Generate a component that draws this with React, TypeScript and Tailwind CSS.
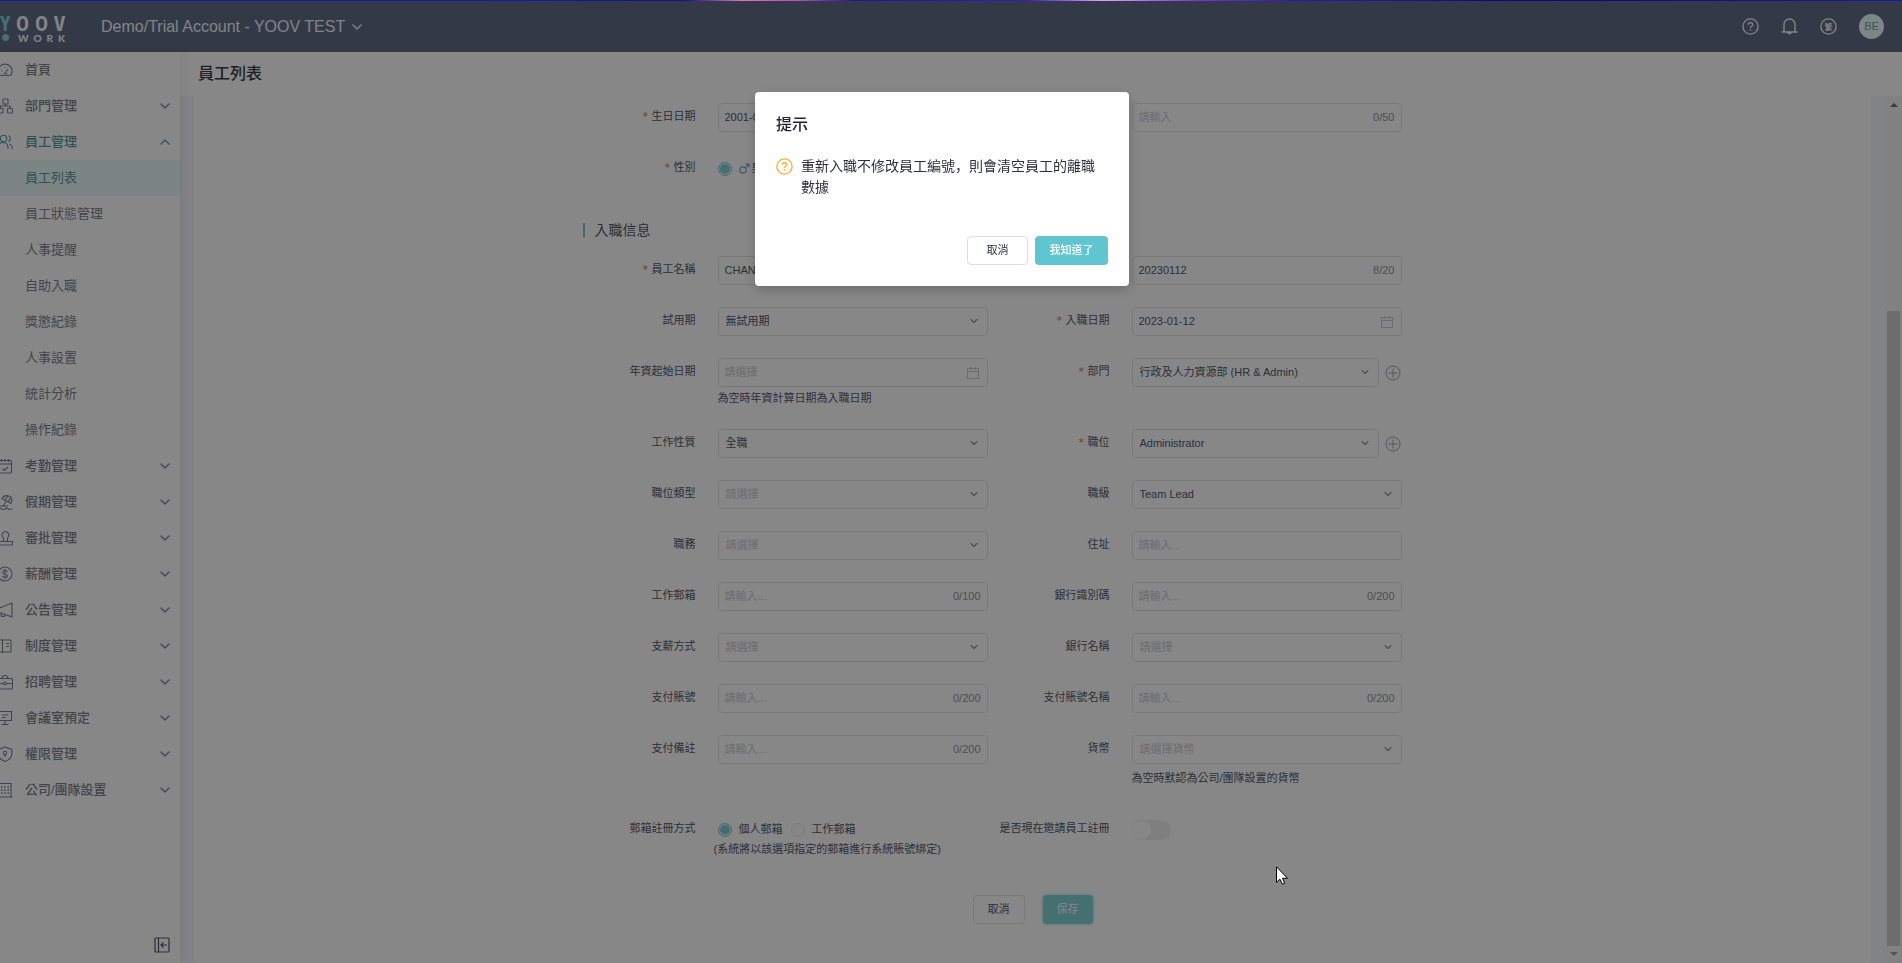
import { useId, type ReactNode } from "react";
import { ChevronDown, ChevronUp } from "lucide-react";

type MenuItem = {
  label: string;
  icon: ReactNode;
  leaf?: boolean;
  children?: string[];
};

const MENU: MenuItem[] = [
  {
    label: "首頁",
    leaf: true,
    icon: (
      <>
        <path d="M2.5 13.5a7 7 0 1 1 11 0z" />
        <path d="M8.5 10.5 11 7M7 12.5a1.5 1.5 0 0 1 3 0M4 9h1M8 5v1" />
      </>
    ),
  },
  {
    label: "部門管理",
    icon: (
      <>
        <rect x="6" y="1" width="5" height="5" rx="0.5" />
        <rect x="1" y="10.5" width="5" height="4.5" rx="0.5" />
        <rect x="10.5" y="10.5" width="5" height="4.5" rx="0.5" />
        <path d="M8.5 6v2M3.5 10.5V8H13v2.5" />
      </>
    ),
  },
  {
    label: "員工管理",
    icon: (
      <>
        <circle cx="6.5" cy="4.5" r="3.2" />
        <path d="M1 15v-1.5a5 5 0 0 1 10 0V15M11.5 1.5a3.3 3.3 0 0 1 0 6M12.5 10c1.8.6 2.8 2.3 2.8 5" />
      </>
    ),
    children: [
      "員工列表",
      "員工狀態管理",
      "人事提醒",
      "自助入職",
      "獎懲紀錄",
      "人事設置",
      "統計分析",
      "操作紀錄",
    ],
  },
  {
    label: "考勤管理",
    icon: (
      <>
        <rect x="1" y="2.5" width="13.5" height="12.5" rx="1" />
        <path d="M1 6h13.5M4.5 1v3M8 1v3M11.5 1v3M5.5 10.5l2 2L11 9" />
      </>
    ),
  },
  {
    label: "假期管理",
    icon: (
      <>
        <path d="M5 4.5C7.5 0 14.500 1 15 6l-1 3.500zM8.500 5.800 11 1.500M11.500 7.500l2.500-5M9.500 7 6 12.500" />
        <path d="M1 15c1-1 2.500-1 3.500 0s2.500 1 3.500 0 2.500-1 3.500 0 2 1 3.500 0M2 12h9" />
      </>
    ),
  },
  {
    label: "審批管理",
    icon: (
      <>
        <path d="M6.500 11.500c0-2 .3-3-.6-4.500a3.300 3.300 0 1 1 5.200 0c-.9 1.500-.6 2.500-.6 4.500" />
        <path d="M1.500 11.500h14V15h-14z" />
      </>
    ),
  },
  {
    label: "薪酬管理",
    icon: (
      <>
        <circle cx="8" cy="8" r="7" />
        <path d="M10.500 6c-.3-1-1.200-1.500-2.500-1.500S5.700 5.200 5.700 6.200c0 2.300 4.800 1.200 4.800 3.600 0 1-1 1.700-2.500 1.700s-2.400-.6-2.700-1.600M8 3v10" />
      </>
    ),
  },
  {
    label: "公告管理",
    icon: (
      <>
        <path d="M1 5.500h3L15 1v14L4 11H1z" />
        <path d="M4 11v1.500a2 2 0 0 0 4 0" />
      </>
    ),
  },
  {
    label: "制度管理",
    icon: (
      <>
        <rect x="1" y="2" width="13" height="12" rx="1" />
        <path d="M5.500 1v14M9 5.500h3M9 8.500h3" />
      </>
    ),
  },
  {
    label: "招聘管理",
    icon: (
      <>
        <rect x="1" y="4.500" width="14.500" height="10.500" rx="1" />
        <path d="M5 4.500c0-2 1-3 3-3s3 1 3 3M1 9.500h5.500M9.500 9.500h6" />
        <circle cx="8" cy="9.500" r="1.500" />
      </>
    ),
  },
  {
    label: "會議室預定",
    icon: (
      <path d="M.5 1.500h15M1.500 1.500v9h13v-9M8 10.500V14M4.500 14.500h7M5 5h6.500M5 7.500h4" />
    ),
  },
  {
    label: "權限管理",
    icon: (
      <>
        <path d="M8 1l6.800 2.500V8c0 3.500-2.800 6-6.800 7.500C4 14 1.200 11.500 1.200 8V3.500z" />
        <circle cx="8" cy="7" r="1.700" />
        <path d="M8 8.500V11" />
      </>
    ),
  },
  {
    label: "公司/團隊設置",
    icon: (
      <>
        <path d="M1.500 15V1.500H14V15M.5 15h15" />
        <path
          strokeWidth="1.6"
          d="M4 5h1.500M7.200 5h1.500M10.500 5H12M4 8h1.500M7.200 8h1.500M10.500 8H12M4 11h1.500M7.200 11h1.500M10.500 11H12"
        />
      </>
    ),
  },
];

function LineIcon({ children }: { children: ReactNode }) {
  return (
    <svg
      viewBox="0 0 16 16"
      className="-ml-[3px] size-4 shrink-0"
      fill="none"
      stroke="currentColor"
      strokeWidth="1.1"
      aria-hidden="true"
    >
      {children}
    </svg>
  );
}

function CalendarIcon() {
  return (
    <svg
      viewBox="0 0 12 12"
      className="mr-0.5 size-3 shrink-0 text-[#c9ccd2]"
      fill="none"
      stroke="currentColor"
      aria-hidden="true"
    >
      <path d="M.5 1.500h11v10H.5zM.5 4.500h11M3.500 0v3M8.500 0v3" />
    </svg>
  );
}

function QuestionIcon({ className }: { className: string }) {
  return (
    <svg
      viewBox="0 0 17 17"
      className={className}
      fill="none"
      stroke="currentColor"
      strokeWidth="1.4"
      aria-hidden="true"
    >
      <circle cx="8.500" cy="8.500" r="7.600" />
      <path d="M6.300 6.800c0-1.300 1-2.100 2.200-2.100s2.200.8 2.200 2c0 1.500-2.200 1.600-2.200 3.300M8.500 11v1.500" />
    </svg>
  );
}

function PlusButton({ label }: { label: string }) {
  return (
    <button type="button" aria-label={label} className="cursor-pointer pr-px">
      <svg
        viewBox="0 0 16 16"
        className="size-4 text-[#a0a4ad]"
        fill="none"
        stroke="currentColor"
        aria-hidden="true"
      >
        <circle cx="8" cy="8" r="7" />
        <path d="M8 3.500v9M3.500 8h9" />
      </svg>
    </button>
  );
}

function Header() {
  return (
    <header className="flex h-[52px] shrink-0 items-center bg-[#626d88] pt-px pr-[18px] text-[#f5f7fa]">
      <a href="#home" aria-label="YOOV WORK" className="block w-[65px]">
        <div className="flex items-center justify-between font-['Open_Sans_Condensed','Liberation_Sans',sans-serif] text-[22px] leading-[22px] font-bold">
          <span className="text-[#82d3d8]">Y</span>
          <span>O</span>
          <span>O</span>
          <span>V</span>
        </div>
        <div className="flex items-center">
          <span className="ml-[2px] size-[7px] rounded-full bg-[#82d3d8]" />
          <div className="ml-[9px] flex flex-1 justify-between font-[Lato,sans-serif] text-[10px] leading-[10px] font-black">
            <span>W</span>
            <span>O</span>
            <span>R</span>
            <span>K</span>
          </div>
        </div>
      </a>
      <button
        type="button"
        className="ml-9 flex cursor-pointer items-center gap-1 text-[16px]"
      >
        Demo/Trial Account - YOOV TEST
        <ChevronDown size={16} strokeWidth={2} />
      </button>
      <div className="ml-auto flex items-center gap-[22px]">
        <button type="button" aria-label="幫助" className="cursor-pointer">
          <QuestionIcon className="size-[17px]" />
        </button>
        <button type="button" aria-label="通知" className="cursor-pointer">
          <svg
            viewBox="0 0 17 17"
            className="size-[17px]"
            fill="none"
            stroke="currentColor"
            strokeWidth="1.4"
            aria-hidden="true"
          >
            <path d="M.5 14h16M3 14V6.500a5.500 5.500 0 0 1 11 0V14M6.800 14.500a1.800 1.800 0 0 0 3.400 0" />
          </svg>
        </button>
        <button type="button" aria-label="語言" className="cursor-pointer">
          <svg viewBox="0 0 17 17" className="size-[17px]">
            <circle
              cx="8.500"
              cy="8.500"
              r="7.600"
              fill="none"
              stroke="currentColor"
              strokeWidth="1.4"
            />
            <text
              x="8.500"
              y="11.500"
              textAnchor="middle"
              fill="currentColor"
              className="text-[8px] font-bold"
            >
              繁
            </text>
          </svg>
        </button>
        <button
          type="button"
          className="size-[25px] cursor-pointer rounded-full bg-[#f0fbfb] text-[11px] text-[#5fa9b3]"
        >
          BE
        </button>
      </div>
    </header>
  );
}

function Sidebar() {
  return (
    <nav className="z-10 flex w-[180px] shrink-0 flex-col bg-white text-[13px] text-[#7d838e] shadow-[2px_0_8px_rgba(29,35,41,0.08)]">
      <ul>
        {MENU.map((item) => (
          <li key={item.label}>
            <a
              href="#menu"
              className={
                item.children
                  ? "flex h-9 items-center pr-[7px] font-medium text-[#4f9ea5]"
                  : "flex h-9 items-center pr-[7px] font-medium"
              }
            >
              <LineIcon>{item.icon}</LineIcon>
              <span className="ml-3 flex-1">{item.label}</span>
              {item.children && <ChevronUp size={16} strokeWidth={1.8} />}
              {!item.children && !item.leaf && (
                <ChevronDown size={16} strokeWidth={1.8} />
              )}
            </a>
            {item.children && (
              <ul>
                {item.children.map((child, i) => (
                  <li key={child}>
                    <a
                      href="#menu"
                      className={
                        i === 0
                          ? "flex h-9 items-center bg-[#ebfafa] pl-[25px] text-[#4f9ea5]"
                          : "flex h-9 items-center pl-[25px]"
                      }
                    >
                      {child}
                    </a>
                  </li>
                ))}
              </ul>
            )}
          </li>
        ))}
      </ul>
      <button
        type="button"
        aria-label="收起選單"
        className="mt-auto mr-[10px] mb-[10px] cursor-pointer self-end text-[#515a6e]"
      >
        <svg
          viewBox="0 0 16 16"
          className="size-4"
          fill="none"
          stroke="currentColor"
          strokeWidth="1.2"
          aria-hidden="true"
        >
          <rect x="1" y="1" width="14" height="14" rx="1" />
          <path d="M4.500 1v14M13 8H7.500M9.500 5.500 7 8l2.500 2.500" />
        </svg>
      </button>
    </nav>
  );
}

function Field({
  label,
  id,
  required,
  help,
  children,
}: {
  label: string;
  id?: string;
  required?: boolean;
  help?: ReactNode;
  children: ReactNode;
}) {
  return (
    <div className="flex items-start">
      <label
        htmlFor={id}
        className="flex-1 pr-[22px] text-right leading-[27px] whitespace-nowrap"
      >
        {required && (
          <span className="mr-[3px] font-['DejaVu_Sans_Mono',monospace] leading-none text-[#ed4014]/80">
            *
          </span>
        )}
        {label}
      </label>
      <div className="w-[270px]">
        {children}
        {help}
      </div>
    </div>
  );
}

type FieldProps = {
  label: string;
  required?: boolean;
  value?: string;
  placeholder?: string;
  help?: ReactNode;
};

function TextField({
  count,
  calendar,
  ...props
}: FieldProps & { count?: string; calendar?: boolean }) {
  const id = useId();
  return (
    <Field label={props.label} id={id} required={props.required} help={props.help}>
      <div className="flex h-[29px] items-center rounded border border-[#e2e4e8] px-1.5">
        <input
          id={id}
          type="text"
          defaultValue={props.value}
          placeholder={props.placeholder}
          className="min-w-0 flex-1 outline-none placeholder:text-[#cbced5]"
        />
        {count && <span className="text-[#8f949e]">{count}</span>}
        {calendar && <CalendarIcon />}
      </div>
    </Field>
  );
}

function SelectField({ addLabel, ...props }: FieldProps & { addLabel?: string }) {
  const id = useId();
  return (
    <Field label={props.label} id={id} required={props.required} help={props.help}>
      <div className="flex items-center gap-1.5">
        <div className="relative flex-1">
          <select
            id={id}
            className={
              props.value
                ? "block h-[29px] w-full appearance-none rounded border border-[#e2e4e8] px-[7px] outline-none"
                : "block h-[29px] w-full appearance-none rounded border border-[#e2e4e8] px-[7px] text-[#cbced5] outline-none"
            }
          >
            <option>{props.value ?? props.placeholder}</option>
          </select>
          <ChevronDown
            size={12}
            strokeWidth={2.2}
            className="pointer-events-none absolute top-2 right-2 text-[#8f949e]"
          />
        </div>
        {addLabel && <PlusButton label={addLabel} />}
      </div>
    </Field>
  );
}

function Radio({
  name,
  checked,
  children,
}: {
  name: string;
  checked?: boolean;
  children: ReactNode;
}) {
  return (
    <label className="flex items-center gap-[7px]">
      <input
        type="radio"
        name={name}
        defaultChecked={checked}
        className="size-[14px] appearance-none rounded-full border border-[#e2e4e8] checked:border-[#82cfd4] checked:bg-[#82cfd4] checked:shadow-[inset_0_0_0_1px_white]"
      />
      {children}
    </label>
  );
}

function EmployeeForm() {
  const toggleId = useId();
  return (
    <form className="mx-auto w-[900px] pt-[7px] text-[11px] text-[#515a6e]">
      <div className="grid grid-cols-[405px_414px] gap-y-[22px]">
        <TextField label="生日日期" required value="2001-01-01" calendar />
        <TextField label="" placeholder="請輸入" count="0/50" />
        <Field label="性別" required>
          <div className="flex h-[29px] items-center gap-2">
            <Radio name="gender" checked>
              <span className="flex items-center gap-0.5">
                <svg
                  viewBox="0 0 11 11"
                  className="size-[11px] text-[#6fa8dc]"
                  fill="none"
                  stroke="currentColor"
                  strokeWidth="1.2"
                  aria-hidden="true"
                >
                  <circle cx="4" cy="7" r="3.200" />
                  <path d="M6.300 4.700 10 1M6.500 1H10v3.500" />
                </svg>
                男
              </span>
            </Radio>
            <Radio name="gender">女</Radio>
          </div>
        </Field>
      </div>

      <h2 className="mt-[37px] mb-4 flex h-5 items-center gap-[10px] text-[14px]">
        <span className="h-[14px] w-0.5 bg-[#7cc8ce]" />
        入職信息
      </h2>

      <div className="grid grid-cols-[405px_414px] gap-y-[22px]">
        <TextField label="員工名稱" required value="CHAN TAI MAN" />
        <TextField label="員工編號" required value="20230112" count="8/20" />
        <SelectField label="試用期" value="無試用期" />
        <TextField label="入職日期" required value="2023-01-12" calendar />
        <TextField
          label="年資起始日期"
          placeholder="請選擇"
          calendar
          help={
            <p className="pt-0.5 leading-[18px]">為空時年資計算日期為入職日期</p>
          }
        />
        <SelectField
          label="部門"
          required
          value="行政及人力資源部 (HR & Admin)"
          addLabel="新增部門"
        />
        <SelectField label="工作性質" value="全職" />
        <SelectField label="職位" required value="Administrator" addLabel="新增職位" />
        <SelectField label="職位類型" placeholder="請選擇" />
        <SelectField label="職級" value="Team Lead" />
        <SelectField label="職務" placeholder="請選擇" />
        <TextField label="住址" placeholder="請輸入..." />
        <TextField label="工作郵箱" placeholder="請輸入..." count="0/100" />
        <TextField label="銀行識別碼" placeholder="請輸入..." count="0/200" />
        <SelectField label="支薪方式" placeholder="請選擇" />
        <SelectField label="銀行名稱" placeholder="請選擇" />
        <TextField label="支付賬號" placeholder="請輸入..." count="0/200" />
        <TextField label="支付賬號名稱" placeholder="請輸入..." count="0/200" />
        <TextField label="支付備註" placeholder="請輸入..." count="0/200" />
        <SelectField
          label="貨幣"
          placeholder="請選擇貨幣"
          help={
            <p className="pt-[5px] leading-[18px]">
              為空時默認為公司/團隊設置的貨幣
            </p>
          }
        />
      </div>

      <div className="mt-7 grid grid-cols-[405px_414px]">
        <Field label="郵箱註冊方式">
          <div className="flex h-[29px] items-center gap-2">
            <Radio name="register" checked>
              個人郵箱
            </Radio>
            <Radio name="register">工作郵箱</Radio>
          </div>
          <p className="-ml-1 leading-[10px]">(系統將以該選項指定的郵箱進行系統賬號綁定)</p>
        </Field>
        <Field label="是否現在邀請員工註冊" id={toggleId}>
          <div className="flex h-[29px] items-center">
            <input
              id={toggleId}
              type="checkbox"
              role="switch"
              className="h-5 w-[39px] appearance-none rounded-full bg-[#f0f0f1] p-px before:block before:size-[18px] before:rounded-full before:bg-white checked:bg-[#82cfd4] checked:before:ml-auto"
            />
          </div>
        </Field>
      </div>

      <div className="mt-[41px] flex justify-center gap-[18px]">
        <button
          type="button"
          className="h-[29px] cursor-pointer rounded border border-[#e2e4e8] px-[14px]"
        >
          取消
        </button>
        <button
          type="submit"
          className="h-[29px] cursor-pointer rounded bg-[#82d3d8] px-[14px] text-white shadow-[0_0_0_2px_rgba(95,197,208,0.2)]"
        >
          保存
        </button>
      </div>
    </form>
  );
}

function ScrollBar() {
  return (
    <div
      className="flex w-[17px] flex-col items-center bg-[#f5f5f6] py-[7px]"
      aria-hidden="true"
    >
      <span className="size-0 border-x-4 border-b-4 border-x-transparent border-b-[#707070]" />
      <span className="mt-[204px] w-[13px] flex-1 bg-[#cfcfcf]" />
      <span className="mt-1.5 size-0 border-x-4 border-t-4 border-x-transparent border-t-[#a0a0a0]" />
    </div>
  );
}

function ConfirmDialog() {
  return (
    <div className="fixed inset-0 z-20 bg-black/47 pt-[92px] pr-[18px]">
      <div
        role="dialog"
        aria-modal="true"
        aria-labelledby="dialog-title"
        className="mx-auto w-[374px] rounded bg-white p-[21px] shadow-[0_4px_12px_rgba(0,0,0,0.2)]"
      >
        <h2
          id="dialog-title"
          className="text-[16px] leading-6 font-medium text-[#1f2433]"
        >
          提示
        </h2>
        <div className="mt-[19px] flex gap-2">
          <QuestionIcon className="mt-0.5 size-[17px] shrink-0 text-[#ffad33]" />
          <p className="font-['Liberation_Sans','Noto_Sans_CJK_SC',sans-serif] text-[14px] leading-[21px] text-[#2b3040]">
            重新入職不修改員工編號，則會清空員工的離職數據
          </p>
        </div>
        <div className="mt-[38px] flex justify-end gap-[7px] text-[11px]">
          <button
            type="button"
            className="h-[29px] min-w-[61px] cursor-pointer rounded border border-[#dcdee2] text-[#2b3040]"
          >
            取消
          </button>
          <button
            type="button"
            className="h-[29px] min-w-[73px] cursor-pointer rounded bg-[#5fc5d0] font-medium text-white"
          >
            我知道了
          </button>
        </div>
      </div>
    </div>
  );
}

function Pointer() {
  return (
    <svg
      viewBox="0 0 12 19"
      className="pointer-events-none fixed top-[866px] left-[1276px] z-30 h-[19px] w-3"
      aria-hidden="true"
    >
      <path
        d="M.5.8v15.700l3.500-3.300 2.300 5 2.400-1-2.200-4.900h5z"
        fill="white"
        stroke="black"
      />
    </svg>
  );
}

export default function App() {
  return (
    <div className="flex h-screen flex-col overflow-hidden bg-white font-['Liberation_Sans','Noto_Sans_CJK_TC',sans-serif]">
      <div className="fixed inset-x-0 top-0 z-30 h-px bg-[linear-gradient(90deg,#1b17b5_0%,#1b17b5_24%,#14109a_36%,#e070c8_39%,#b050c0_42%,#1a14a8_45%,#3a1ad0_54%,#e0a0ff_58%,#7a30e0_63%,#2a18c0_68%,#0c0a78_80%,#1a14b0_100%)]" />
      <Header />
      <div className="flex min-h-0 flex-1">
        <Sidebar />
        <main className="flex min-w-0 flex-1 flex-col">
          <h1 className="h-11 shrink-0 pl-[18px] text-[16px] leading-[44px] font-medium text-[#3a3d48]">
            員工列表
          </h1>
          <div className="flex min-h-0 flex-1 bg-[#f5f7fa]">
            <div className="ml-[14px] min-w-0 flex-1 overflow-hidden rounded-b bg-white">
              <EmployeeForm />
            </div>
            <div className="w-[14px]" />
            <ScrollBar />
          </div>
        </main>
      </div>
      <ConfirmDialog />
      <Pointer />
    </div>
  );
}
